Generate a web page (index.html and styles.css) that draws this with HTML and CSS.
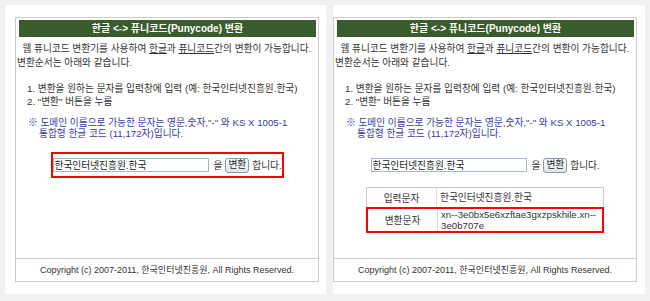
FILE: index.html
```html
<!DOCTYPE html>
<html lang="ko">
<head>
  <meta charset="UTF-8">
  <title>한글 퓨니코드 변환</title>
  <link rel="stylesheet" href="styles.css">
</head>
<body>
  <div class="wrap">

    <!-- 변환 전 화면 -->
    <div class="shot shot-left">
      <div class="box">
        <div class="title">한글 &lt;-&gt; 퓨니코드(Punycode) 변환</div>
        <div class="content">
          <p class="intro">&nbsp;&nbsp;웹 퓨니코드 변환기를 사용하여 <u>한글</u>과 <u>퓨니코드</u>간의 변환이 가능합니다.<br>변환순서는 아래와 같습니다.</p>
          <ol class="steps">
            <li>1. 변환을 원하는 문자를 입력창에 입력 (예: 한국인터넷진흥원.한국)</li>
            <li>2. "변환" 버튼을 누름</li>
          </ol>
          <p class="note">※ 도메인 이름으로 가능한 문자는 영문,숫자,"-" 와 KS X 1005-1<br>통합형 한글 코드 (11,172자)입니다.</p>
          <div class="convert marked">
            <input type="text" class="field" value="한국인터넷진흥원.한국">
            <span>을</span>
            <button type="button" class="btn">변환</button>
            <span>합니다.</span>
          </div>
        </div>
        <div class="footer">Copyright (c) 2007-2011, 한국인터넷진흥원, All Rights Reserved.</div>
      </div>
    </div>

    <!-- 변환 후 화면 -->
    <div class="shot shot-right">
      <div class="box">
        <div class="title">한글 &lt;-&gt; 퓨니코드(Punycode) 변환</div>
        <div class="content">
          <p class="intro">&nbsp;&nbsp;웹 퓨니코드 변환기를 사용하여 <u>한글</u>과 <u>퓨니코드</u>간의 변환이 가능합니다.<br>변환순서는 아래와 같습니다.</p>
          <ol class="steps">
            <li>1. 변환을 원하는 문자를 입력창에 입력 (예: 한국인터넷진흥원.한국)</li>
            <li>2. "변환" 버튼을 누름</li>
          </ol>
          <p class="note">※ 도메인 이름으로 가능한 문자는 영문,숫자,"-" 와 KS X 1005-1<br>통합형 한글 코드 (11,172자)입니다.</p>
          <div class="convert">
            <input type="text" class="field" value="한국인터넷진흥원.한국">
            <span>을</span>
            <button type="button" class="btn">변환</button>
            <span>합니다.</span>
          </div>
          <div class="result">
            <div class="row">
              <div class="label">입력문자</div>
              <div class="value">한국인터넷진흥원.한국</div>
            </div>
            <div class="row marked">
              <div class="label">변환문자</div>
              <div class="value">xn--3e0bx5e6xzftae3gxzpskhile.xn--<br>3e0b707e</div>
            </div>
          </div>
        </div>
        <div class="footer">Copyright (c) 2007-2011, 한국인터넷진흥원, All Rights Reserved.</div>
      </div>
    </div>

  </div>
</body>
</html>
```

FILE: styles.css
```css
body {
  margin: 0;
  background-color: #f1f1f1;
  font-family: 'Liberation Sans', 'Noto Sans CJK KR', sans-serif;
  font-size: 9.7px;
  color: #333;
}
.wrap {
  display: flex;
  gap: 7px;
  padding: 5px;
}
.shot {
  background-color: #fff;
  height: 277px;
  padding-top: 12px;
}
.shot-left {
  width: 311px;
  padding-left: 10px;
}
.shot-right {
  width: 312px;
}
.box {
  width: 302px;
  height: 263px;
  border: 1px solid #ccc;
  display: flex;
  flex-direction: column;
}
.title {
  margin: 2px 2px 0 3px;
  height: 17px;
  line-height: 17px;
  background-color: #3a5b2b;
  color: #fff;
  font-size: 10px;
  font-weight: bold;
  text-align: center;
}
.content {
  flex: 1;
  padding: 0 1px;
}
.intro {
  margin: 5px 0 0;
  line-height: 14px;
  white-space: nowrap;
}
.steps {
  list-style: none;
  margin: 12px 0 0;
  padding: 0 0 0 10px;
  line-height: 13px;
}
.note {
  margin: 9px 0 0;
  padding-left: 22px;
  text-indent: -11px;
  line-height: 11px;
  color: #3b3aa6;
}
.convert {
  width: 229px;
  height: 22px;
  margin: 13px auto 0;
  border: 2px solid transparent;
  display: flex;
  align-items: center;
  gap: 3px;
  white-space: nowrap;
}
.convert.marked {
  border-color: #f00;
}
.convert span {
  flex: none;
}
.field {
  flex: none;
  width: 152px;
  height: 12px;
  margin: 0 2px 0 0;
  padding: 0 1px;
  border: 1px solid #a9b8c8;
  font: inherit;
  color: #222;
}
.btn {
  flex: none;
  height: 15px;
  padding: 0 2px;
  border: 1px solid #8a99aa;
  border-radius: 3px;
  background: linear-gradient(#fff, #dfe3ea);
  font: inherit;
  line-height: 12px;
  color: #222;
}
.result {
  width: 236px;
  margin: 9px auto 0;
  border: 1px solid #ccc;
}
.row {
  display: grid;
  grid-template-columns: 70px 1fr;
  min-height: 19px;
}
.row + .row {
  border-top: 1px solid #ccc;
}
.row.marked {
  border: 2px solid #f00;
  margin: 0 -1px -1px;
  min-height: 22px;
}
.label {
  display: flex;
  align-items: center;
  justify-content: center;
  border-right: 1px solid #ddd;
}
.value {
  display: flex;
  align-items: center;
  padding: 0 3px;
  line-height: 11px;
}
.footer {
  height: 22px;
  line-height: 22px;
  border-top: 1px solid #ccc;
  font-size: 9px;
  text-align: center;
}
```
